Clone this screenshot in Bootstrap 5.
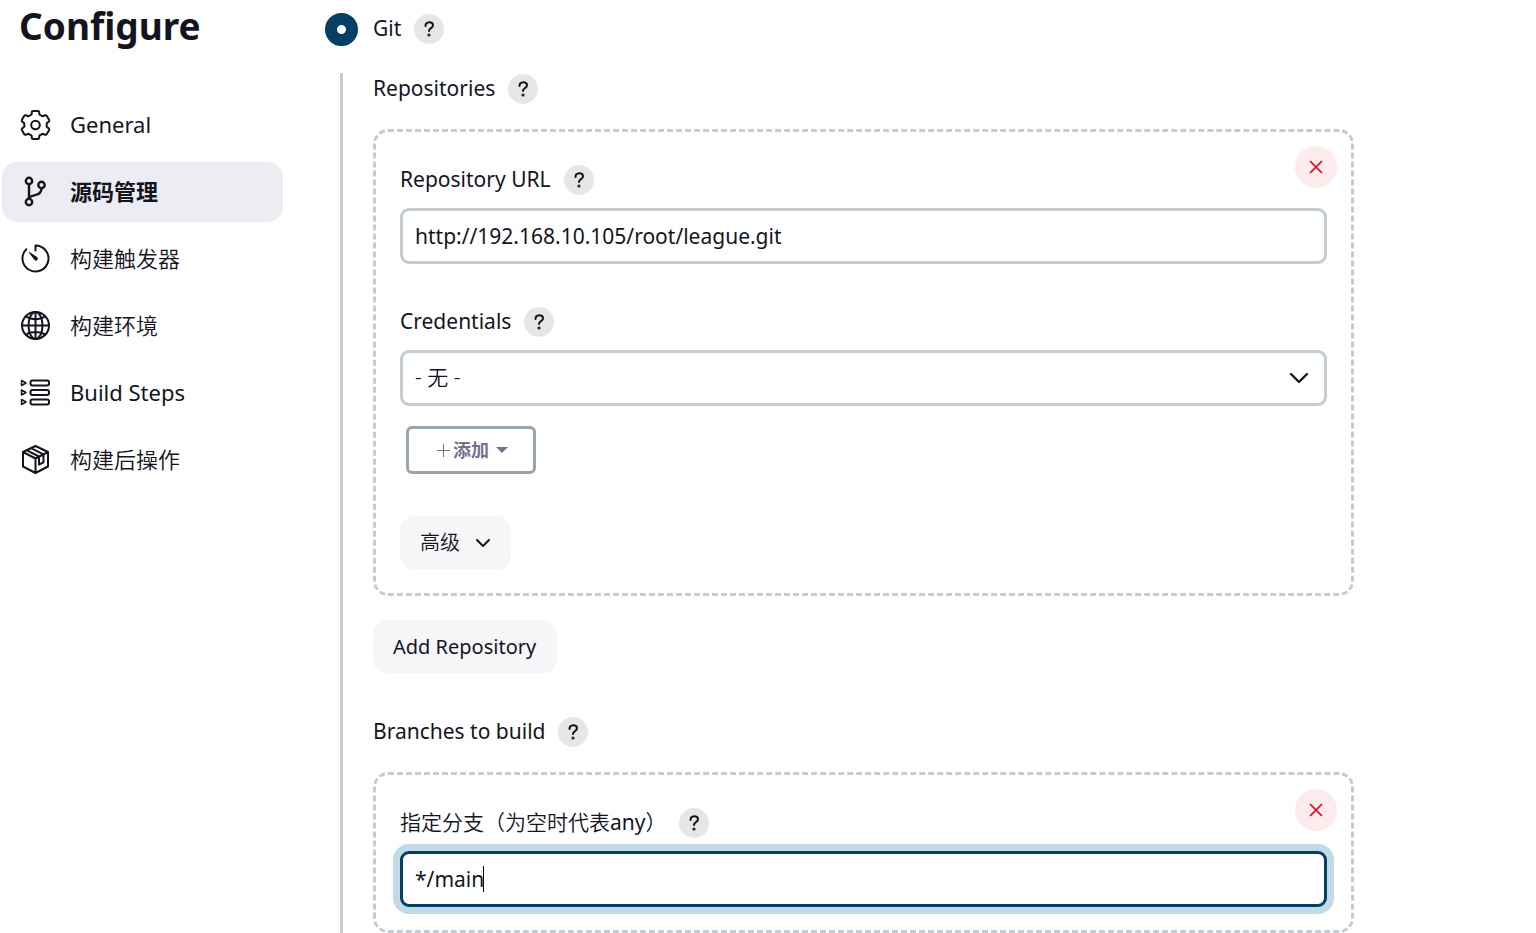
<!DOCTYPE html>
<html lang="zh-CN">
<head>
<meta charset="utf-8">
<meta name="viewport" content="width=device-width, initial-scale=1">
<title>Configure</title>
<link href="https://cdn.jsdelivr.net/npm/bootstrap@5.3.0/dist/css/bootstrap.min.css" rel="stylesheet">
<style>
  :root { --ink: #14141f; --line: #c3ccd1; --accent: #053f63; }
  body { font-family: "Noto Sans", "Noto Sans CJK SC", sans-serif; font-size: 21px; line-height: 32px; color: var(--ink); }
  .han { font-weight: 350; }
  .side { width: 285px; padding: 0 2px; }
  .page-title { font-size: 37px; line-height: 44px; font-weight: 700; padding: 4px 17px; margin-bottom: 43px; }
  .task-list { gap: 7px; }
  .task { height: 60px; padding: 0 18px 2px; gap: 20px; border-radius: 15px; font-size: 22px; color: var(--ink); }
  .task.active { background: #ecedf3; font-weight: 700; }
  .task svg { width: 30px; height: 30px; overflow: visible; fill: none; stroke: currentColor; stroke-width: 2; stroke-linejoin: round; stroke-linecap: round; }
  .config { margin: 13px 20px 0 40px; max-width: 1029px; }
  .pick-row { gap: 12px; }
  .pick { appearance: none; width: 33px; height: 33px; margin-right: 3px; border: 12px solid var(--accent); border-radius: 50%; background: #fff; }
  .nested { margin: 28px 0 0 15px; border-left: 3px solid var(--line); padding-left: 30px; }
  .help { width: 30px; height: 30px; border: 0; border-radius: 50%; background: #e6e6e6; padding: 0; }
  .help svg { width: 30px; height: 30px; display: block; fill: none; stroke: var(--ink); stroke-width: 2; stroke-linecap: round; stroke-linejoin: round; }
  .cap { height: 32px; gap: 13px; }
  .cap > :first-child { align-self: flex-start; line-height: 30px; }
  .chunk { border: 3px dashed var(--line); border-radius: 15px; padding: 32px 24px 23px; margin-top: 24px; }
  .field { height: 56px; border: 3px solid var(--line); border-radius: 9px; padding: 0 12px; font-size: 21px; color: var(--ink); }
  .field-wrap { margin-top: 12px; }
  .field:focus { border-color: var(--accent); box-shadow: 0 0 0 7px #c2d9e7; color: var(--ink); caret-color: transparent; }
  .caret { left: 83px; top: 15px; width: 1px; height: 26px; background: #000; }
  select.field { background-image: url("data:image/svg+xml,%3Csvg xmlns='http://www.w3.org/2000/svg' viewBox='0 0 20 20'%3E%3Cpath d='M2 6l8 8 8-8' fill='none' stroke='%2314141f' stroke-width='2.4' stroke-linecap='round' stroke-linejoin='round'/%3E%3C/svg%3E"); background-size: 20px 20px; background-position: right 15px center; }
  .remove { top: 14px; right: 14px; width: 42px; height: 42px; border: 0; border-radius: 50%; background: #fcebed; padding: 0; }
  .remove svg { width: 42px; height: 42px; display: block; stroke: #e6001f; stroke-width: 1.7; stroke-linecap: round; }
  .soft { height: 54px; border: 0; border-radius: 15px; background: #f6f6f9; color: var(--ink); font-size: 20px; padding: 0 21px 0 20px; }
  .add { height: 48px; width: 130px; margin: 20px 6px 0; border: 3px solid #98a5ad; border-radius: 6px; background: #fff; color: #73718f; font-size: 18px; font-weight: 700; padding: 0 0 0 2px; gap: 3px; }
  .space { margin-top: 42px; }
</style>
</head>
<body>
<div class="d-flex">
  <aside class="side flex-shrink-0">
    <h1 class="page-title">Configure</h1>
    <nav class="task-list d-flex flex-column">
      <a href="#general" class="task d-flex align-items-center text-decoration-none"><svg viewBox="-.5 -1 30 30"><path d="M12.500 1h5q1 0 1.100 1l.4 2.600q2 .8 3 1.700l2.700-1q1-.3 1.500.5l2.500 4.300q.4.800-.4 1.500L26.200 13.300v3.400l2.100 1.700q.8.700.4 1.500l-2.500 4.300q-.5.800-1.500.5l-2.700-1q-1 .9-3 1.700l-.4 2.600q-.1 1-1.100 1h-5q-1 0-1.100-1L11 25.400q-2-.8-3-1.700l-2.700 1q-1 .3-1.500-.5L1.300 19.900q-.4-.8.4-1.500l2.100-1.700v-3.400L1.700 11.600q-.8-.7-.4-1.500l2.500-4.300q.5-.8 1.500-.5l2.700 1q1-.9 3-1.700l.4-2.600q.1-1 1.100-1z"/><circle cx="15" cy="15" r="4.300"/></svg><span>General</span></a>
      <a href="#scm" class="task active d-flex align-items-center text-decoration-none" aria-current="true"><svg viewBox="0 -.5 30 30"><g stroke-width="2.400"><circle cx="9" cy="4.500" r="3.200"/><circle cx="9" cy="25.500" r="3.200"/><circle cx="21.500" cy="8.500" r="3.200"/><path d="M9 8v14M21.500 12c0 5-3.500 6-6.500 6.700S9 20 9 22"/></g></svg><span>源码管理</span></a>
      <a href="#triggers" class="task d-flex align-items-center text-decoration-none"><svg viewBox="-.5 -.5 30 30"><path d="M15 7V2A13 13 0 1 1 5.800 5.800"/><path d="M9 9l7.500 5a1.500 1.500 0 0 1-2.200 2.200z" fill="currentColor" stroke-width="1"/></svg><span class="han">构建触发器</span></a>
      <a href="#environment" class="task d-flex align-items-center text-decoration-none"><svg viewBox="-.5 -.5 30 30"><circle cx="15" cy="15" r="13.500"/><ellipse cx="15" cy="15" rx="7" ry="13.500"/><path d="M15 1.500v27M1.500 15h27M5.500 6c5 3.500 14 3.500 19 0M5.500 24c5-3.500 14-3.500 19 0"/></svg><span class="han">构建环境</span></a>
      <a href="#steps" class="task d-flex align-items-center text-decoration-none"><svg viewBox="-.5 -.5 30 30"><rect x="10" y="3" width="18.500" height="5" rx="2"/><rect x="10" y="12.500" width="18.500" height="5" rx="2"/><rect x="10" y="22" width="18.500" height="5" rx="2"/><path stroke-width="1.500" d="M1 3l4.500 2.500L1 8zM1 12.500L5.500 15 1 17.500zM1 22l4.500 2.500L1 27z"/></svg><span>Build Steps</span></a>
      <a href="#post" class="task d-flex align-items-center text-decoration-none"><svg viewBox="-.5 -.5 30 30"><path d="M15 1.500l12.500 6v14.500L15 28.500 2.500 22V7.500zM2.500 7.500L15 14l12.500-6.500M15 14v14.500M6 5.700L18.500 12v8l4.500-2.200V9.800L10.500 3.700"/></svg><span class="han">构建后操作</span></a>
    </nav>
  </aside>

  <main class="config flex-grow-1">
    <div class="pick-row d-flex align-items-center">
      <div class="cap d-flex align-items-center"><input class="pick flex-shrink-0" type="radio" name="scm" id="git" checked></div>
      <div class="cap d-flex align-items-center"><label for="git">Git</label><button class="help" type="button" aria-label="Help"><svg viewBox="0 0 30 30"><path d="M11.500 12c0-5 7.500-5 7.500-.8 0 3-4 2.800-4 5.800"/><circle cx="15" cy="21" r=".6"/></svg></button></div>
    </div>
    <div class="nested">
      <div class="cap d-flex align-items-center"><span>Repositories</span><button class="help" type="button" aria-label="Help"><svg viewBox="0 0 30 30"><path d="M11.500 12c0-5 7.500-5 7.500-.8 0 3-4 2.800-4 5.800"/><circle cx="15" cy="21" r=".6"/></svg></button></div>
      <section class="chunk position-relative">
        <button class="remove position-absolute" type="button" aria-label="Delete"><svg viewBox="0 0 42 42"><path d="M15.500 15.500l11 11M26.500 15.500l-11 11"/></svg></button>
        <div class="cap d-flex align-items-center"><label for="url">Repository URL</label><button class="help" type="button" aria-label="Help"><svg viewBox="0 0 30 30"><path d="M11.500 12c0-5 7.500-5 7.500-.8 0 3-4 2.800-4 5.800"/><circle cx="15" cy="21" r=".6"/></svg></button></div>
        <div class="field-wrap"><input class="field form-control" id="url" type="text" value="http://192.168.10.105/root/league.git"></div>
        <div class="cap space d-flex align-items-center"><label for="cred">Credentials</label><button class="help" type="button" aria-label="Help"><svg viewBox="0 0 30 30"><path d="M11.500 12c0-5 7.500-5 7.500-.8 0 3-4 2.800-4 5.800"/><circle cx="15" cy="21" r=".6"/></svg></button></div>
        <div class="field-wrap"><select class="field form-select han" id="cred"><option>- 无 -</option></select></div>
        <button class="add btn d-flex align-items-center justify-content-center" type="button"><svg width="14" height="14" viewBox="0 0 14 14" stroke="currentColor"><path d="M7.500 1v13M1 7.500h13"/></svg><span>添加</span><svg class="ms-1" width="12" height="6" viewBox="0 0 12 6" fill="currentColor"><path d="M0 0h12L6 6z"/></svg></button>
        <button class="soft space btn d-flex align-items-center" type="button"><span class="han">高级</span><svg class="ms-3" width="14" height="9" viewBox="0 0 14 9" fill="none" stroke="currentColor" stroke-width="2" stroke-linecap="round" stroke-linejoin="round"><path d="M1 1l6 6 6-6"/></svg></button>
      </section>
      <button class="soft btn mt-4" type="button">Add Repository</button>
      <div class="cap space d-flex align-items-center"><span>Branches to build</span><button class="help" type="button" aria-label="Help"><svg viewBox="0 0 30 30"><path d="M11.500 12c0-5 7.500-5 7.500-.8 0 3-4 2.800-4 5.800"/><circle cx="15" cy="21" r=".6"/></svg></button></div>
      <section class="chunk position-relative">
        <button class="remove position-absolute" type="button" aria-label="Delete"><svg viewBox="0 0 42 42"><path d="M15.500 15.500l11 11M26.500 15.500l-11 11"/></svg></button>
        <div class="cap d-flex align-items-center"><label class="han" for="branch">指定分支（为空时代表<span class="fw-normal">any</span>）</label><button class="help" type="button" aria-label="Help"><svg viewBox="0 0 30 30"><path d="M11.500 12c0-5 7.500-5 7.500-.8 0 3-4 2.800-4 5.800"/><circle cx="15" cy="21" r=".6"/></svg></button></div>
        <div class="field-wrap position-relative"><input class="field form-control" id="branch" type="text" value="*/main" autofocus><span class="caret position-absolute" aria-hidden="true"></span></div>
      </section>
    </div>
  </main>
</div>
<script src="https://cdn.jsdelivr.net/npm/bootstrap@5.3.0/dist/js/bootstrap.bundle.min.js"></script>
</body>
</html>
